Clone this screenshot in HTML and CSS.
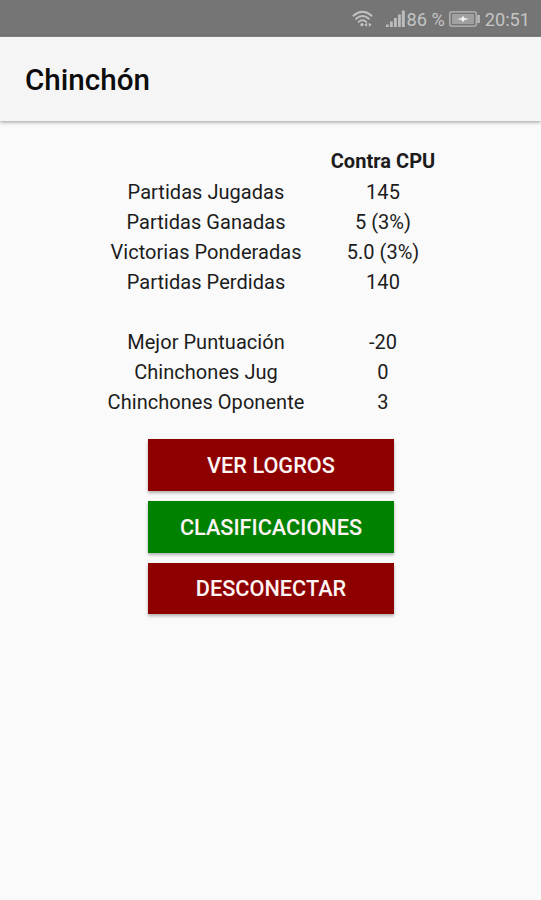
FILE: index.html
```html
<!DOCTYPE html>
<html lang="es">
<head>
  <meta charset="UTF-8">
  <title>Chinchón</title>
  <link rel="stylesheet" href="styles.css">
</head>
<body>

<div class="status-bar">
  <svg class="wifi" width="21" height="18" viewBox="0 0 22 18" fill="none" stroke="#c0c0c0" stroke-width="2" stroke-linecap="round">
    <path d="M1.5 5.5Q11 -2.5 20.5 5.5"/>
    <path d="M4.3 8.8Q11 3 17.7 8.8"/>
    <path d="M7 12Q11 8.4 15 12"/>
    <circle cx="10.4" cy="15" r="1.7" fill="#c4c4c4" stroke="none"/>
    <path d="M12.8 15l3-2.2v4.4zM20.6 15l-3-2.2v4.4z" fill="#c4c4c4" stroke="none"/>
  </svg>
  <svg class="signal" width="19" height="18" viewBox="0 0 19 18" fill="#bcbcbc">
    <rect x="0" y="14.5" width="2.8" height="2.5"/>
    <rect x="4" y="11.5" width="2.8" height="5.5"/>
    <rect x="8" y="8" width="2.8" height="9"/>
    <rect x="12" y="4.5" width="2.8" height="12.5"/>
    <rect x="15.8" y="0.5" width="3" height="16.5"/>
  </svg>
  <span class="percent">86 %</span>
  <svg class="battery" width="32" height="16" viewBox="0 0 32 16">
    <rect x="0.8" y="0.8" width="26.4" height="14.4" rx="1.5" fill="none" stroke="#bcbcbc" stroke-width="1.3"/>
    <rect x="3" y="3" width="22" height="10" fill="#a0a0a0"/>
    <path d="M8 8L12.5 7L14 4.8L15.5 7L20 8L15.5 9L14 11.2L12.5 9z" fill="#f0f0f0"/>
    <rect x="28.3" y="4" width="2.5" height="8" fill="#bcbcbc"/>
  </svg>
  <span class="clock">20:51</span>
</div>

<header class="toolbar">
  <h1>Chinchón</h1>
</header>

<main>
  <table class="stats">
    <tr><td></td><th>Contra CPU</th></tr>
    <tr><td>Partidas Jugadas</td><td>145</td></tr>
    <tr><td>Partidas Ganadas</td><td>5 (3%)</td></tr>
    <tr><td>Victorias Ponderadas</td><td>5.0 (3%)</td></tr>
    <tr><td>Partidas Perdidas</td><td>140</td></tr>
    <tr><td></td><td></td></tr>
    <tr><td>Mejor Puntuación</td><td>-20</td></tr>
    <tr><td>Chinchones Jug</td><td>0</td></tr>
    <tr><td>Chinchones Oponente</td><td>3</td></tr>
  </table>

  <div class="buttons">
    <button>VER LOGROS</button>
    <button class="green">CLASIFICACIONES</button>
    <button>DESCONECTAR</button>
  </div>
</main>

</body>
</html>
```
FILE: styles.css
```css
body {
  margin: 0;
  height: 900px;
  overflow: hidden;
  font-family: Roboto, sans-serif;
  background: #fafafa;
  color: #1c1c1c;
}
.status-bar {
  display: flex;
  align-items: center;
  justify-content: flex-end;
  box-sizing: border-box;
  height: 37px;
  padding: 2px 11px 0 0;
  border-bottom: 1px solid #8c8c8c;
  background: #757575;
  color: #c4c4c4;
  font-size: 18.2px;
}
.signal {
  margin: 0 1px 0 13px;
}
.battery {
  margin: 0 4px;
}
.toolbar {
  display: flex;
  align-items: center;
  box-sizing: border-box;
  height: 84px;
  padding: 2px 0 0 25px;
  background: #f5f5f5;
  box-shadow: 0 1px 4px rgba(0, 0, 0, 0.4);
}
h1 {
  margin: 0;
  font-size: 29.6px;
  font-weight: 500;
  color: #0c0c0c;
}
.stats {
  width: 354px;
  margin: 25.4px 0 0 94px;
  border-collapse: collapse;
  table-layout: fixed;
  font-size: 20px;
  letter-spacing: 0.04px;
  text-align: center;
}
.stats tr {
  height: 30.1px;
}
.stats td,
.stats th {
  padding: 0;
  line-height: 30px;
  white-space: nowrap;
}
.stats td:first-child {
  width: 224px;
}
.stats th {
  font-weight: 700;
}
.buttons {
  display: flex;
  flex-direction: column;
  gap: 10px;
  width: 246px;
  margin: 22px 0 0 148px;
}
button {
  height: 51.7px;
  padding: 1px 0 0;
  border: none;
  background: #8e0000;
  box-shadow: 0 2px 3px rgba(0, 0, 0, 0.3);
  color: #fff5f5;
  font-family: inherit;
  font-size: 21.7px;
  font-weight: 500;
}
.green {
  background: #008200;
}
```
